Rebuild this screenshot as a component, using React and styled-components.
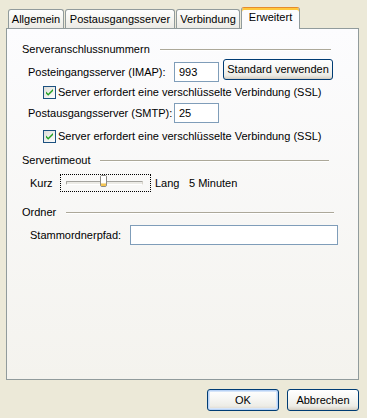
import React from "react";
import styled, { createGlobalStyle } from "styled-components";

const Global = createGlobalStyle`
  html, body { margin: 0; padding: 0; background: #ECE9D8; }
  body { font-family: "Liberation Sans", Arial, sans-serif; font-size: 11px; color: #000; }
`;

const Window = styled.div`
  width: 367px;
  height: 418px;
  box-sizing: border-box;
  padding: 7px 0 0 6px;
  background: #ECE9D8;
  display: flex;
  flex-direction: column;
`;

const TabStrip = styled.div`
  display: flex;
  align-items: flex-end;
  height: 21px;
  padding-left: 2px;
  position: relative;
  z-index: 1;
`;

const Tab = styled.div`
  box-sizing: border-box;
  width: ${(p) => p.$w}px;
  margin-right: ${(p) => (p.$active ? 0 : 1)}px;
  height: ${(p) => (p.$active ? 22 : 19)}px;
  margin-bottom: ${(p) => (p.$active ? -1 : 0)}px;
  border: 1px solid #919B9C;
  border-bottom: none;
  border-top-color: ${(p) => (p.$active ? "#E68B2C" : "#919B9C")};
  border-radius: 3px 3px 0 0;
  background: ${(p) =>
    p.$active ? "#FCFCFE" : "linear-gradient(#FEFEFE, #F4F3EE 60%, #ECEBE6)"};
  box-shadow: ${(p) => (p.$active ? "inset 0 2px 0 #FFC83C" : "none")};
  padding-top: ${(p) => (p.$active ? 3 : 3)}px;
  line-height: 13px;
  text-align: center;
  white-space: nowrap;
`;

const Panel = styled.div`
  box-sizing: border-box;
  width: 353px;
  height: 352px;
  border: 1px solid #919B9C;
  background: linear-gradient(#FCFCFE, #F4F3EE);
  padding: 14px 0 0 15px;
  display: flex;
  flex-direction: column;
`;

const GroupHeader = styled.div`
  display: flex;
  align-items: center;
  height: 13px;
  width: ${(p) => p.$w}px;
  margin-top: ${(p) => p.$mt || 0}px;
  line-height: 13px;
  white-space: nowrap;
`;

const Rule = styled.div`
  flex: 1;
  height: 0;
  border-top: 1px solid #ACA899;
  border-bottom: 1px solid #FFFFFF;
  margin-left: 10px;
`;

const Row = styled.div`
  display: flex;
  align-items: center;
  height: ${(p) => p.$h}px;
  margin-top: ${(p) => p.$mt}px;
  padding-left: ${(p) => p.$indent}px;
  line-height: 13px;
  white-space: nowrap;
`;

const Label = styled.span`
  width: ${(p) => (p.$w ? `${p.$w}px` : "auto")};
  margin-left: ${(p) => p.$ml || 0}px;
  flex: none;
`;

const TextInput = styled.input`
  box-sizing: border-box;
  width: ${(p) => p.$w}px;
  height: ${(p) => p.$h || 20}px;
  border: 1px solid #7F9DB9;
  background: #FFFFFF;
  padding: 0 0 0 4px;
  margin: 0;
  font: inherit;
  color: #000;
  outline: none;
`;

const Button = styled.button`
  box-sizing: border-box;
  width: ${(p) => p.$w}px;
  height: ${(p) => p.$h}px;
  margin: 0;
  padding: 0;
  font: inherit;
  color: #000;
  border: 1px solid #003C74;
  border-radius: 3px;
  background: linear-gradient(#FFFFFF, #F6F6F3 45%, #EDECE6 80%, #D8D2C6);
  box-shadow: ${(p) =>
    p.$default
      ? "inset 0 0 0 1px #B8D2F5, inset 0 0 0 2px #D6E5F9"
      : "inset 0 -1px 0 #D6D0C5"};
  line-height: 13px;
  white-space: nowrap;
`;

const ServerButton = styled(Button)`
  margin-left: 4px;
  align-self: flex-start;
  margin-top: -3px;
`;

const CheckLabel = styled.span`
  margin-left: 2px;
`;

const SliderBox = styled.div`
  box-sizing: border-box;
  width: 91px;
  height: 18px;
  border: 1px dotted #000;
  position: relative;
  display: flex;
  align-items: center;
  padding-left: 5px;
`;

const Track = styled.div`
  box-sizing: border-box;
  width: 77px;
  height: 4px;
  background: #ECEBE6;
  border-top: 1px solid #A4A39E;
  border-left: 1px solid #A4A39E;
  border-bottom: 1px solid #FFFFFF;
  border-right: 1px solid #D6D3CA;
  border-radius: 1px;
`;

const ThumbWrap = styled.div`
  position: absolute;
  left: ${(p) => p.$left}px;
  top: 0px;
  width: 7px;
  height: 12px;
  display: flex;
`;

const Footer = styled.div`
  display: flex;
  justify-content: flex-end;
  gap: 8px;
  padding-right: 8px;
  margin-top: 9px;
`;

function CheckBox() {
  return (
    <svg width="13" height="13" viewBox="0 0 13 13">
      <defs>
        <linearGradient id="cbg" x1="0" y1="0" x2="1" y2="1">
          <stop offset="0" stopColor="#DCDCD7" />
          <stop offset="1" stopColor="#FFFFFF" />
        </linearGradient>
      </defs>
      <rect x="0.5" y="0.5" width="12" height="12" fill="url(#cbg)" stroke="#1C5180" />
      <path
        d="M3 5.5 L5.2 7.7 L10 2.9 L10 4.9 L5.2 9.7 L3 7.5 Z"
        fill="#21A121"
      />
    </svg>
  );
}

function Thumb() {
  return (
    <svg width="7" height="12" viewBox="0 0 7 12">
      <rect x="0.5" y="0.5" width="6" height="11" rx="1.5" fill="#F4F3EE" stroke="#8C8A86" />
      <rect x="1" y="1" width="5" height="7" fill="#FFFFFF" />
      <rect x="1" y="8.5" width="5" height="2.5" fill="#F5C552" />
    </svg>
  );
}

function CheckRow({ mt }) {
  return (
    <Row $h={13} $mt={mt} $indent={21}>
      <CheckBox />
      <CheckLabel>Server erfordert eine verschlüsselte Verbindung (SSL)</CheckLabel>
    </Row>
  );
}

export default function App() {
  return (
    <>
      <Global />
      <Window>
        <TabStrip>
          <Tab $w={56}>Allgemein</Tab>
          <Tab $w={110}>Postausgangsserver</Tab>
          <Tab $w={64}>Verbindung</Tab>
          <Tab $w={59} $active>Erweitert</Tab>
        </TabStrip>
        <Panel>
          <GroupHeader $w={309}>
            Serveranschlussnummern
            <Rule />
          </GroupHeader>
          <Row $h={20} $mt={6} $indent={6}>
            <Label $w={146}>Posteingangsserver (IMAP):</Label>
            <TextInput $w={45} readOnly value="993" />
            <ServerButton $w={110} $h={21}>Standard verwenden</ServerButton>
          </Row>
          <CheckRow mt={4} />
          <Row $h={20} $mt={4} $indent={6}>
            <Label $w={146}>Postausgangsserver (SMTP):</Label>
            <TextInput $w={45} readOnly value="25" />
          </Row>
          <CheckRow mt={7} />
          <GroupHeader $w={307} $mt={11}>
            Servertimeout
            <Rule />
          </GroupHeader>
          <Row $h={18} $mt={7} $indent={8}>
            <Label $w={30}>Kurz</Label>
            <SliderBox>
              <Track />
              <ThumbWrap $left={39}>
                <Thumb />
              </ThumbWrap>
            </SliderBox>
            <Label $w={34} $ml={4}>Lang</Label>
            <Label>5 Minuten</Label>
          </Row>
          <GroupHeader $w={312} $mt={14}>
            Ordner
            <Rule />
          </GroupHeader>
          <Row $h={20} $mt={6} $indent={8}>
            <Label $w={100}>Stammordnerpfad:</Label>
            <TextInput $w={208} readOnly value="" />
          </Row>
        </Panel>
        <Footer>
          <Button $w={72} $h={22} $default>OK</Button>
          <Button $w={72} $h={22}>Abbrechen</Button>
        </Footer>
      </Window>
    </>
  );
}
